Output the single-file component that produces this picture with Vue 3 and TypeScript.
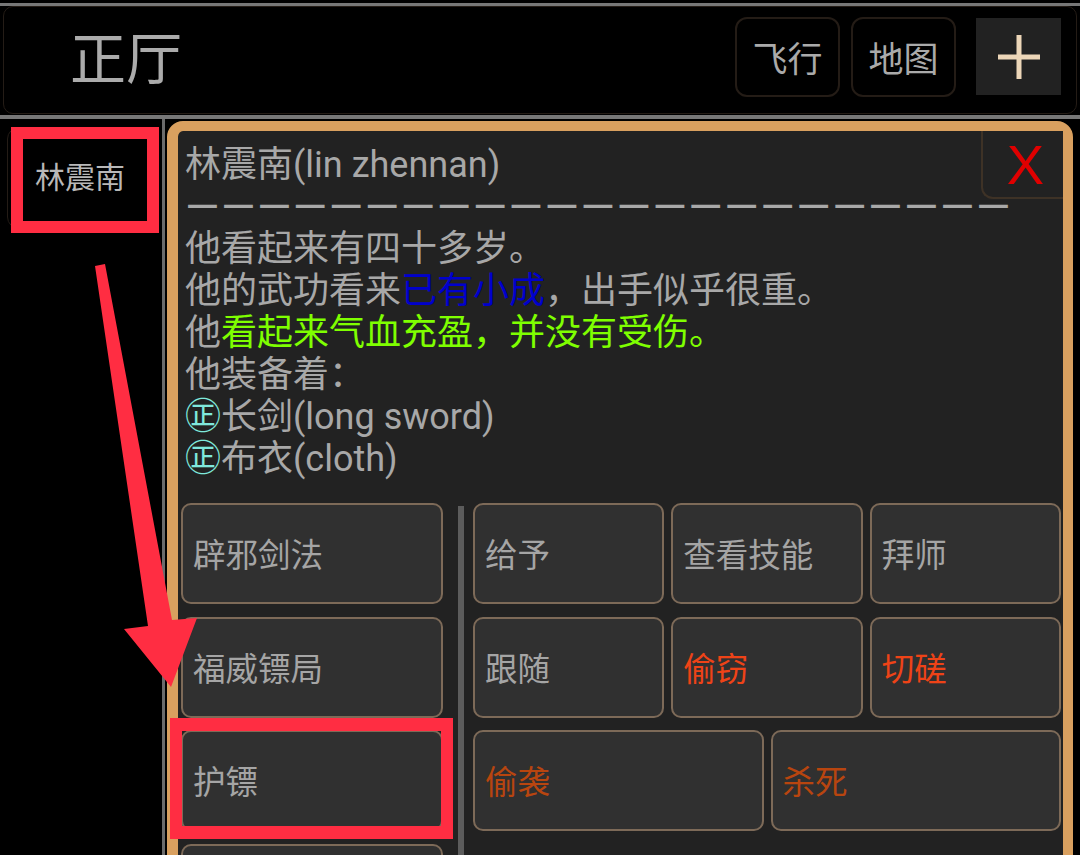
<script setup lang="ts">
type Action = { label: string; tone?: 'warn' | 'danger' }

const sideActions: string[] = ['辟邪剑法', '福威镖局', '护镖', '']

const actionRows: Action[][] = [
  [{ label: '给予' }, { label: '查看技能' }, { label: '拜师' }],
  [{ label: '跟随' }, { label: '偷窃', tone: 'warn' }, { label: '切磋', tone: 'warn' }],
  [{ label: '偷袭', tone: 'danger' }, { label: '杀死', tone: 'danger' }],
]

const divider = '—'.repeat(23)
</script>

<template>
  <div class="screen">
    <header class="topbar">
      <div class="topbar__inner">
        <h1 class="room">正厅</h1>
        <div class="topbar__actions">
          <button type="button" class="nav-btn">飞行</button>
          <button type="button" class="nav-btn">地图</button>
          <button type="button" class="plus-btn" aria-label="更多">
            <svg width="42" height="44" viewBox="0 0 42 44">
              <path d="M21 0V44M0 22H42" stroke="#ecd6b8" stroke-width="5" fill="none" />
            </svg>
          </button>
        </div>
      </div>
    </header>

    <main class="body">
      <aside class="side">
        <button type="button" class="npc-tab">林震南</button>
      </aside>

      <section class="panel">
        <button type="button" class="close-btn">X</button>
        <div class="desc">
          <div>林震南(lin zhennan)</div>
          <div class="desc__rule">{{ divider }}</div>
          <div>他看起来有四十多岁。</div>
          <div>他的武功看来<span class="blue">已有小成</span>，出手似乎很重。</div>
          <div>他<span class="green">看起来气血充盈，并没有受伤。</span></div>
          <div>他装备着：</div>
          <div><span class="equip">㊣</span>长剑(long sword)</div>
          <div><span class="equip">㊣</span>布衣(cloth)</div>
        </div>

        <div class="actions">
          <div class="actions__left">
            <button v-for="item in sideActions" :key="item" type="button" class="act-btn">{{ item }}</button>
          </div>
          <div class="actions__rule"></div>
          <div class="actions__right">
            <div v-for="(row, i) in actionRows" :key="i" class="act-row">
              <button
                v-for="item in row"
                :key="item.label"
                type="button"
                class="act-btn"
                :class="item.tone"
              >
                {{ item.label }}
              </button>
            </div>
          </div>
        </div>
      </section>
    </main>

    <!-- red markup drawn over the screenshot -->
    <div class="mark mark--npc"></div>
    <div class="mark mark--escort"></div>
    <svg class="arrow" width="1080" height="855" viewBox="0 0 1080 855">
      <path d="M95 266L105 264L172 620L197 618L171 687L124 629L148 626Z" fill="#ff2d42" />
    </svg>
  </div>
</template>

<style scoped>
.screen {
  position: relative;
  width: 1080px;
  height: 855px;
  overflow: hidden;
  background: #000;
  padding-top: 3px;
  box-sizing: border-box;
  font-family: Roboto, "Noto Sans CJK SC", sans-serif;
  color: #aaa;
}

.topbar {
  height: 116px;
  box-sizing: border-box;
  border-top: 3px solid #777;
  border-bottom: 4px solid #777;
  padding: 0 3px 1px;
}

.topbar__inner {
  display: flex;
  align-items: center;
  justify-content: space-between;
  height: 100%;
  box-sizing: border-box;
  border: 1px solid #241c16;
  border-radius: 10px;
  padding: 0 15px 0 66px;
}

.room {
  margin: 0;
  font-size: 56px;
  font-weight: 400;
  line-height: 1;
  color: #ababab;
}

.topbar__actions {
  display: flex;
  align-items: center;
  gap: 11px;
  margin-bottom: 7px;
}

button {
  font-family: inherit;
  margin: 0;
  cursor: pointer;
}

.nav-btn {
  width: 105px;
  height: 80px;
  padding: 0;
  background: #000;
  border: 2px solid #241c16;
  border-radius: 12px;
  color: #aaa;
  font-size: 35px;
}

.plus-btn {
  display: flex;
  align-items: center;
  justify-content: center;
  width: 85px;
  height: 77px;
  margin-left: 9px;
  padding: 0;
  border: 0;
  background: #222;
}

.body {
  display: flex;
  height: 736px;
  padding-top: 2px;
}

.side {
  flex: none;
  width: 155px;
  border-right: 3px solid #6b6b6b;
  margin-right: 2px;
  margin-top: -2px;
  padding: 8px 0 0 7px;
}

.npc-tab {
  display: block;
  width: 146px;
  height: 102px;
  padding: 0 0 6px;
  background: #000;
  border: 1px solid #241c16;
  border-radius: 12px;
  color: #b8b8b8;
  font-size: 30px;
}

.panel {
  position: relative;
  width: 906px;
  height: 760px;
  flex: none;
  box-sizing: border-box;
  border: 10px solid #d9a05f;
  border-left-width: 11px;
  border-radius: 16px;
  background: #222;
  padding: 13px 2px 0 3px;
}

.close-btn {
  position: absolute;
  top: 0;
  right: 0;
  width: 82px;
  height: 68px;
  padding: 0 0 0 5px;
  background: #222;
  border: 2px solid #3e3226;
  border-top: 0;
  border-right: 0;
  border-radius: 0 0 0 12px;
  color: #e00000;
  font-family: "Liberation Sans", sans-serif;
  font-size: 56px;
}

.desc {
  padding-left: 4px;
  font-size: 36px;
  line-height: 42px;
  white-space: nowrap;
  color: #a8a8a8;
}

.desc__rule {
  font-size: 44px;
  letter-spacing: 1.6px;
}

.blue {
  color: #0000cd;
}

.green {
  color: #7fff00;
}

.equip {
  color: #7fe8dc;
}

.actions {
  display: flex;
  margin-top: 23px;
}

.actions__left {
  display: flex;
  flex-direction: column;
  gap: 12.5px;
  width: 262px;
  flex: none;
}

.actions__rule {
  width: 6px;
  flex: none;
  margin: 3px 9px 0 15px;
  background: #5c5c5c;
}

.actions__right {
  display: flex;
  flex-direction: column;
  gap: 12.5px;
  flex: 1;
  min-width: 0;
}

.act-row {
  display: flex;
  gap: 7px;
}

.act-row .act-btn {
  flex: 1;
  min-width: 0;
}

.act-btn {
  display: block;
  height: 101px;
  flex: none;
  box-sizing: border-box;
  padding: 0 0 2px 10px;
  background: #303030;
  border: 2px solid #7d6a58;
  border-radius: 10px;
  color: #a5a5a5;
  font-size: 32.5px;
  text-align: left;
}

.act-btn.warn {
  color: #ee4317;
}

.act-btn.danger {
  color: #b8450f;
}

.mark {
  position: absolute;
  box-sizing: border-box;
  border: 12px solid #ff2d42;
}

.mark--npc {
  left: 11px;
  top: 127px;
  width: 148px;
  height: 106px;
}

.mark--escort {
  left: 170px;
  top: 718px;
  width: 283px;
  height: 121px;
  border-width: 13px 12px;
}

.arrow {
  position: absolute;
  left: 0;
  top: 0;
  pointer-events: none;
}
</style>
